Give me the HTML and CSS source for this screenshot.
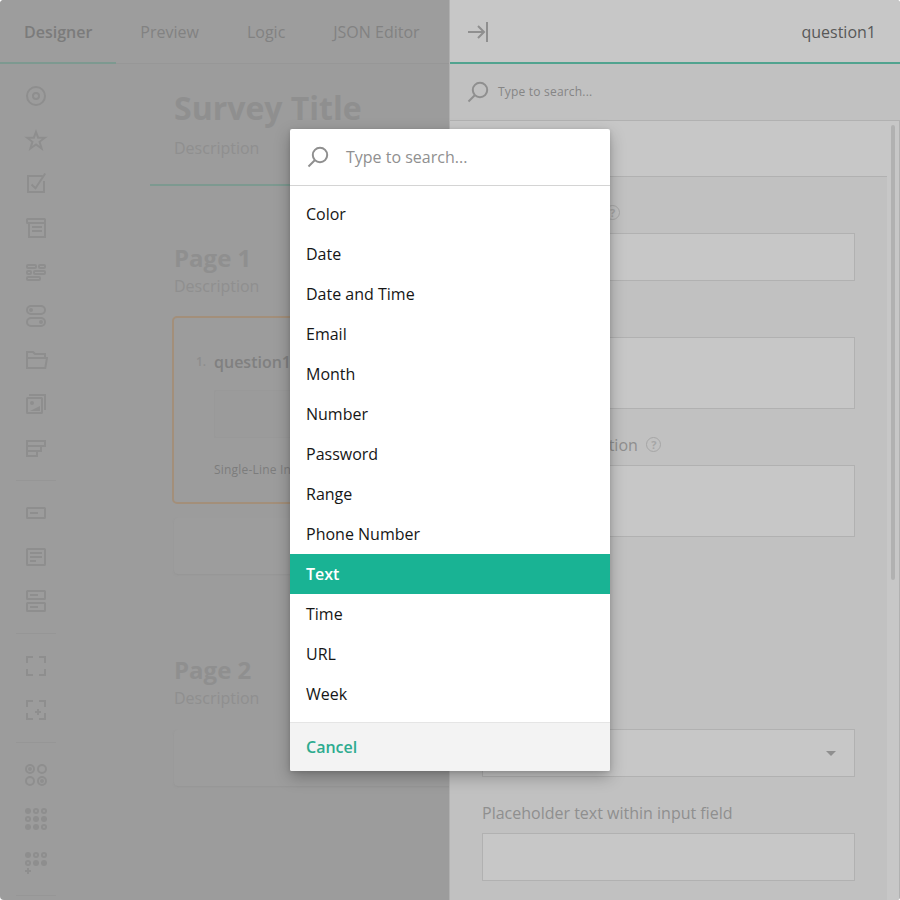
FILE: index.html
```html
<!DOCTYPE html>
<html lang="en">
<head>
<meta charset="utf-8">
<title>Survey Creator</title>
<link rel="stylesheet" href="styles.css">
</head>
<body>
<div class="app">
  <div class="main">
    <nav class="tabs">
      <span class="tab tab-active">Designer</span>
      <span class="tab">Preview</span>
      <span class="tab">Logic</span>
      <span class="tab">JSON Editor</span>
    </nav>
    <div class="workspace">
      <aside class="toolbox">
        <div class="tool"><svg viewBox="0 0 24 24"><circle cx="12" cy="12" r="9"/><circle cx="12" cy="12" r="3"/></svg></div>
        <div class="tool"><svg viewBox="0 0 24 24"><path d="M12 4l2.100 5.700h6.700l-5.200 4.100 2 6.700-5.600-4-5.600 4 2-6.700-5.200-4.100h6.700z"/></svg></div>
        <div class="tool"><svg viewBox="0 0 24 24"><path d="M18.500 4H4v16h16V9M7.500 12.500l4 3.700 9.700-14.700"/></svg></div>
        <div class="tool"><svg viewBox="0 0 24 24"><rect x="3" y="3" width="18" height="4" rx=".5"/><path d="M5 7v14h16V7M8 11h10M8 15h10"/></svg></div>
        <div class="tool"><svg viewBox="0 0 24 24"><rect x="3" y="5" width="9" height="3" rx="1"/><rect x="15" y="5" width="6" height="3" rx="1"/><rect x="3" y="11" width="4" height="3" rx="1"/><rect x="10" y="11" width="11" height="3" rx="1"/><rect x="3" y="17" width="13" height="3" rx="1"/></svg></div>
        <div class="tool"><svg viewBox="0 0 24 24"><rect x="3" y="2" width="18" height="8" rx="4"/><rect x="3" y="14" width="18" height="8" rx="4"/><circle class="fill" cx="7" cy="6" r="2"/><circle class="fill" cx="17" cy="18" r="2"/></svg></div>
        <div class="tool"><svg viewBox="0 0 24 24"><path d="M3 10V4h6l2 2h10v4M3 10h20l-1.700 10H3z"/></svg></div>
        <div class="tool"><svg viewBox="0 0 24 24"><rect x="3" y="6" width="15" height="15" rx=".5"/><path d="M5 3h16v15"/><circle class="fill" cx="8" cy="11" r="2"/><path class="fill" d="M6 19l10-5v5z"/></svg></div>
        <div class="tool"><svg viewBox="0 0 24 24"><path d="M3 5h18v5H3zM3 10h14v5H3zM3 15h10v5H3z"/></svg></div>
        <div class="divider"></div>
        <div class="tool"><svg viewBox="0 0 24 24"><rect x="3" y="7" width="18" height="10" rx=".5"/><path d="M6 12h8"/></svg></div>
        <div class="tool"><svg viewBox="0 0 24 24"><rect x="3" y="4" width="18" height="16" rx=".5"/><path d="M6 8h12M6 12h12M6 16h6"/></svg></div>
        <div class="tool"><svg viewBox="0 0 24 24"><rect x="3" y="2" width="18" height="8" rx=".5"/><rect x="3" y="14" width="18" height="8" rx=".5"/><path d="M6 6h8M6 18h8"/></svg></div>
        <div class="divider"></div>
        <div class="tool"><svg viewBox="0 0 24 24"><path d="M9 3H3v6M15 3h6v6M9 21H3v-6M15 21h6v-6"/></svg></div>
        <div class="tool"><svg viewBox="0 0 24 24"><path d="M9 3H3v6M15 3h6v6M9 21H3v-6M15 21h6v-6M14 11v6M11 14h6"/></svg></div>
        <div class="divider"></div>
        <div class="tool"><svg viewBox="0 0 24 24"><circle cx="6" cy="6" r="4"/><circle cx="18" cy="6" r="4"/><circle cx="6" cy="18" r="4"/><circle cx="18" cy="18" r="4"/><circle class="fill" cx="6" cy="6" r="2"/><circle class="fill" cx="18" cy="18" r="2"/></svg></div>
        <div class="tool"><svg viewBox="0 0 24 24"><circle class="fill" cx="4" cy="4" r="3"/><circle cx="12" cy="4" r="2"/><circle cx="20" cy="4" r="2"/><circle cx="4" cy="12" r="2"/><circle class="fill" cx="12" cy="12" r="3"/><circle class="fill" cx="20" cy="12" r="3"/><circle class="fill" cx="4" cy="20" r="3"/><circle class="fill" cx="12" cy="20" r="3"/><circle cx="20" cy="20" r="2"/></svg></div>
        <div class="tool"><svg viewBox="0 0 24 24"><circle class="fill" cx="4" cy="4" r="3"/><circle cx="12" cy="4" r="2"/><circle cx="20" cy="4" r="2"/><circle cx="4" cy="12" r="2"/><circle class="fill" cx="12" cy="12" r="3"/><circle class="fill" cx="20" cy="12" r="3"/><path d="M4 17v6M1 20h6"/></svg></div>
        <div class="divider"></div>
      </aside>
      <section class="canvas">
        <header class="survey-head">
          <h1>Survey Title</h1>
          <p>Description</p>
        </header>
        <div class="page page-one">
          <h2>Page 1</h2>
          <p>Description</p>
          <div class="question">
            <div class="q-title"><span class="q-num">1.</span><b>question1</b></div>
            <div class="q-input"></div>
            <div class="q-type">Single-Line Input</div>
          </div>
          <div class="add-box"></div>
        </div>
        <div class="page page-two">
          <h2>Page 2</h2>
          <p>Description</p>
          <div class="add-box"></div>
        </div>
      </section>
    </div>
  </div>
  <aside class="panel">
    <header class="panel-head">
      <svg class="icon" viewBox="0 0 24 24"><path d="M2 12h16M12 6l6 6-6 6M21 2v20"/></svg>
      <span>question1</span>
    </header>
    <div class="panel-search">
      <svg class="icon" viewBox="0 0 24 24"><circle cx="14" cy="10" r="7.200"/><path d="M9 15l-6.500 6.500"/></svg>
      <span>Type to search...</span>
    </div>
    <div class="panel-body">
      <div class="props">
        <div class="group-head"></div>
        <div class="fields">
          <div class="label">Question name <i class="help">?</i></div>
          <div class="box"></div>
          <div class="label">Question title</div>
          <div class="box tall"></div>
          <div class="label">Question description <i class="help">?</i></div>
          <div class="box tall"></div>
          <div class="label label-type">Input type</div>
          <div class="box select"><svg viewBox="0 0 10 5"><path d="M0 0h10L5 5z"/></svg></div>
          <div class="label">Placeholder text within input field</div>
          <div class="box"></div>
        </div>
      </div>
      <div class="scroll"><div class="thumb"></div></div>
    </div>
  </aside>
</div>
<div class="popup">
  <div class="popup-search">
    <svg class="icon" viewBox="0 0 24 24"><circle cx="14" cy="10" r="7.200"/><path d="M9 15l-6.500 6.500"/></svg>
    <span>Type to search...</span>
  </div>
  <ul class="list">
    <li>Color</li>
    <li>Date</li>
    <li>Date and Time</li>
    <li>Email</li>
    <li>Month</li>
    <li>Number</li>
    <li>Password</li>
    <li>Range</li>
    <li>Phone Number</li>
    <li class="selected">Text</li>
    <li>Time</li>
    <li>URL</li>
    <li>Week</li>
  </ul>
  <div class="popup-foot">Cancel</div>
</div>
</body>
</html>
```
FILE: styles.css
```css
* { box-sizing: border-box; }
body, h1, h2, p, ul { margin: 0; padding: 0; }
body {
  width: 900px;
  height: 900px;
  overflow: hidden;
  background: #fff;
  font: 16px/24px "Open Sans", sans-serif;
}
svg { display: block; fill: none; stroke: currentColor; stroke-width: 2; }
.icon { width: 24px; height: 24px; flex: none; color: #8f8f8f; }
.app {
  display: flex;
  height: 900px;
  border-radius: 4px;
  overflow: hidden;
  background: #9c9c9c;
}

.main { width: 449px; overflow: hidden; color: #8f8f8f; }
.tabs { display: flex; height: 64px; border-bottom: 1px solid #979797; white-space: nowrap; background: #9d9d9d; }
.tab { height: 64px; padding: 20px 24px; color: #828282; }
.tab-active { border-bottom: 2px solid #7d9990; font-weight: 600; color: #7b7b7b; }
.workspace { display: flex; height: 836px; }
.toolbox { width: 72px; flex: none; padding-top: 10px; }
.tool { height: 44px; padding: 10px 24px; color: #8e8e8e; }
.tool svg { width: 24px; height: 24px; }
.tool .fill { fill: currentColor; stroke: none; }
.divider { height: 1px; margin: 10px 16px; background: #969696; }

.canvas { width: 600px; flex: none; padding-left: 78px; }
.survey-head { height: 122px; padding: 22px 24px 0; border-bottom: 2px solid #7d9990; }
h1 { font-size: 32px; line-height: 44px; font-weight: 700; }
.survey-head p { margin-top: 6px; }
.page { padding: 0 24px; }
.page-one { padding-top: 56px; }
.page-two { padding-top: 80px; }
h2 { font-size: 24px; line-height: 32px; font-weight: 700; }
.question {
  height: 188px;
  margin: 18px 0 0 -2px;
  padding: 32px 24px 0 22px;
  border: 2px solid #a38f7a;
  border-radius: 5px;
}
.q-title { display: flex; color: #808080; }
.q-title b { font-weight: 600; }
.q-num { width: 18px; font-size: 12px; font-weight: 600; color: #8d8d8d; }
.q-input { height: 48px; margin: 16px 0 0 18px; background: #9b9b9b; border: 1px solid #999; border-radius: 2px; }
.q-type { margin: 22px 0 0 18px; font-size: 12px; font-weight: 500; letter-spacing: .2px; line-height: 20px; color: #7c7c7c; }
.add-box { height: 56px; margin-top: 14px; border-radius: 4px; background: #9d9d9d; box-shadow: 0 1px 2px #959595; }
.page-two .add-box { margin-top: 20px; }

.panel { width: 451px; flex: none; border-left: 1px solid #b0b0b0; background: #c1c1c1; color: #8f8f8f; }
.panel-head {
  display: flex;
  align-items: center;
  justify-content: space-between;
  height: 64px;
  padding: 2px 24px 0 16px;
  border-bottom: 2px solid #51a38f;
  background: #c7c7c7;
}
.panel-head span { color: #585858; }
.panel-search {
  display: flex;
  align-items: center;
  gap: 8px;
  height: 57px;
  padding-left: 16px;
  border-bottom: 1px solid #b1b1b1;
  font-size: 12px;
  letter-spacing: .2px;
  color: #858585;
}
.panel-body { display: flex; height: 779px; border-right: 1px solid #b1b1b1; }
.props { width: 437px; }
.group-head { height: 56px; background: #c7c7c7; border-bottom: 1px solid #b1b1b1; }
.fields { padding: 24px 32px 0 32px; }
.label { display: flex; align-items: center; gap: 8.500px; height: 24px; margin-bottom: 8px; }
.label-type { margin-top: 160px; }
.help {
  width: 15px;
  height: 15px;
  margin-top: -1px;
  border: 1px solid #a6a6a6;
  border-radius: 50%;
  font: 700 11px/13px "Open Sans", sans-serif;
  text-align: center;
  color: #a6a6a6;
}
.box { height: 48px; margin-bottom: 24px; border: 1px solid #b1b1b1; background: #c7c7c7; }
.tall { height: 72px; }
.select { display: flex; align-items: center; justify-content: flex-end; padding-right: 18px; }
.select svg { width: 10px; height: 5px; fill: #8f8f8f; stroke: none; }
.scroll { flex: 1; padding: 4px 0 0 4px; background: #c7c7c7; }
.thumb { width: 4px; height: 455px; border-radius: 2px; background: #b1b1b1; }

.popup {
  position: absolute;
  left: 290px;
  top: 129px;
  width: 320px;
  height: 642px;
  overflow: hidden;
  border-radius: 2px;
  background: #fff;
  box-shadow: 0 6px 16px rgba(0, 0, 0, .27), 0 1px 4px rgba(0, 0, 0, .12);
}
.popup-search {
  display: flex;
  align-items: center;
  gap: 16px;
  height: 57px;
  padding-left: 16px;
  border-bottom: 1px solid #d4d4d4;
  color: #909090;
}
.list { padding: 8px 0; list-style: none; color: #161616; }
.list li { height: 40px; padding: 8px 16px; }
.list .selected { background: #19b394; color: #fff; font-weight: 600; }
.popup-foot {
  height: 49px;
  padding: 12px 16px;
  border-top: 1px solid #e5e5e5;
  background: #f3f3f3;
  color: #2dab8f;
  font-weight: 600;
}
```
